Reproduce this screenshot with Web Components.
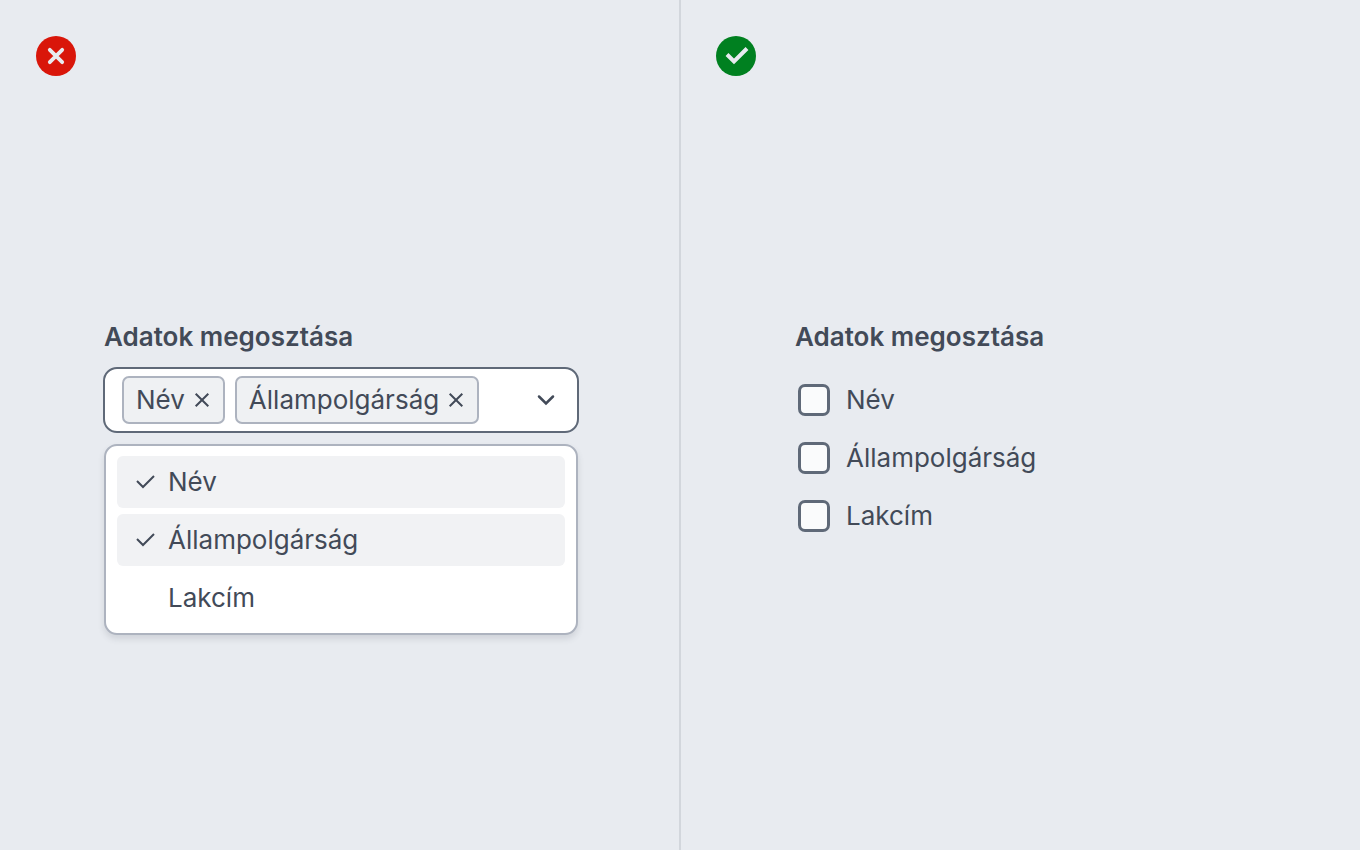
<!DOCTYPE html>
<html lang="hu">
<head>
<meta charset="utf-8">
<meta name="viewport" content="width=device-width, initial-scale=1">
<title>Adatok megosztása</title>
<style>
  body {
    margin: 0;
    font: 400 26px/32px Inter, "Liberation Sans", sans-serif;
    color: #424a58;
    background: #e8ebf0;
    --line: #d2d6dc;
    --outline: #5f6978;
    --outline-soft: #adb3bf;
    --fill: #f1f2f4;
  }
</style>
</head>
<body>
<compare-board>
  <example-panel verdict="bad">
    <multi-select legend="Adatok megosztása" options="Név,Állampolgárság,Lakcím" selected="Név,Állampolgárság"></multi-select>
  </example-panel>
  <example-panel verdict="good">
    <check-group legend="Adatok megosztása">
      <check-row>Név</check-row>
      <check-row>Állampolgárság</check-row>
      <check-row>Lakcím</check-row>
    </check-group>
  </example-panel>
</compare-board>

<script>
class BaseElement extends HTMLElement {
  constructor() {
    super();
    this.attachShadow({ mode: "open" });
  }
}

customElements.define("compare-board", class extends BaseElement {
  connectedCallback() {
    this.shadowRoot.innerHTML = `
      <style>
        :host { display: grid; grid-template-columns: 1fr 1fr; min-height: 100vh; }
      </style>
      <slot></slot>`;
  }
});

customElements.define("verdict-mark", class extends BaseElement {
  connectedCallback() {
    const good = this.getAttribute("verdict") === "good";
    this.shadowRoot.innerHTML = `
      <style>
        :host { display: block; width: 40px; height: 40px; }
        svg { display: block; }
      </style>
      <svg width="40" height="40" viewBox="0 0 40 40" role="img" aria-label="${good ? "Helyes" : "Helytelen"}">
        <circle cx="20" cy="20" r="20" fill="${good ? "#008020" : "#d9160a"}"/>
        <path d="${good ? "M11 18.5l7 7L31 12.5" : "M13.8 13.8l12.4 12.4M26.2 13.8l-12.4 12.4"}"
          fill="none" stroke="#e8ebf0" stroke-width="${good ? 4 : 3.8}" stroke-linecap="${good ? "butt" : "round"}"/>
      </svg>`;
  }
});

customElements.define("example-panel", class extends BaseElement {
  connectedCallback() {
    this.shadowRoot.innerHTML = `
      <style>
        :host { display: block; box-sizing: border-box; padding: 36px 36px 40px; border-right: 1px solid var(--line); }
        :host([verdict="good"]) { padding-left: 35px; border-right: 0; border-left: 1px solid var(--line); }
        .content { margin-top: 245px; padding: 0 64px 0 67px; }
        :host([verdict="good"]) .content { padding-left: 79px; }
      </style>
      <verdict-mark verdict="${this.getAttribute("verdict")}"></verdict-mark>
      <div class="content"><slot></slot></div>`;
  }
});

customElements.define("value-chip", class extends BaseElement {
  connectedCallback() {
    this.shadowRoot.innerHTML = `
      <style>
        :host {
          display: flex; align-items: center; gap: 6px; box-sizing: border-box; height: 48px;
          padding: 0 10px 0 12px; border: 2px solid var(--outline-soft); border-radius: 7px; background: #eff1f3;
        }
        button { display: flex; padding: 1px; border: 0; background: none; color: inherit; cursor: pointer; }
      </style>
      <slot></slot>
      <button type="button" aria-label="Eltávolítás">
        <svg width="20" height="20" viewBox="0 0 20 20" aria-hidden="true"><path d="M3.7 3.7l12.6 12.6M16.3 3.7L3.7 16.3" fill="none" stroke="currentColor" stroke-width="2"/></svg>
      </button>`;
    this.shadowRoot.querySelector("button").onclick = () =>
      this.dispatchEvent(new CustomEvent("remove", { bubbles: true }));
  }
});

customElements.define("menu-option", class extends BaseElement {
  connectedCallback() {
    this.shadowRoot.innerHTML = `
      <style>
        :host { display: block; }
        label { display: flex; align-items: center; height: 52px; padding-left: 18px; gap: 11px; border-radius: 6px; cursor: pointer; }
        label:has(:checked) { background: var(--fill); }
        .tick { display: grid; width: 22px; height: 22px; }
        .tick > * { grid-area: 1 / 1; }
        input { appearance: none; margin: 0; }
        svg { visibility: hidden; pointer-events: none; }
        input:checked + svg { visibility: visible; }
      </style>
      <label>
        <span class="tick">
          <input type="checkbox"${this.hasAttribute("checked") ? " checked" : ""}>
          <svg width="22" height="22" viewBox="0 0 22 22" aria-hidden="true"><path d="M2 10l6 6L19 5" fill="none" stroke="currentColor" stroke-width="2"/></svg>
        </span>
        <span><slot></slot></span>
      </label>`;
    this.shadowRoot.querySelector("input").onchange = e => {
      this.toggleAttribute("checked", e.target.checked);
      this.dispatchEvent(new CustomEvent("toggle-option", { bubbles: true }));
    };
  }
});

customElements.define("multi-select", class extends BaseElement {
  connectedCallback() {
    const options = this.getAttribute("options").split(",");
    const selected = new Set(this.getAttribute("selected").split(","));
    this.shadowRoot.innerHTML = `
      <style>
        :host { display: block; }
        h2 { margin: 0 1px 14px; font: inherit; font-weight: 600; }
        .field {
          display: flex; align-items: center; justify-content: space-between; box-sizing: border-box; min-height: 66px;
          padding: 7px 19px 7px 17px; border: 2px solid var(--outline); border-radius: 14px; background: #fff;
        }
        .chips { display: flex; flex-wrap: wrap; gap: 10px; }
        .toggle { display: flex; padding: 0; border: 0; background: none; color: inherit; cursor: pointer; }
        .menu {
          display: grid; gap: 6px; margin: 11px 1px 0; padding: 10px 11px 9px;
          border: 2px solid var(--outline-soft); border-radius: 13px; background: #fff;
          box-shadow: 0 4px 6px rgb(66 74 88 / 14%);
        }
        .menu[hidden] { display: none; }
      </style>
      <h2 id="legend">${this.getAttribute("legend")}</h2>
      <div class="field" role="group" aria-labelledby="legend">
        <div class="chips"></div>
        <button class="toggle" type="button" aria-label="Lista" aria-expanded="true" aria-controls="menu">
          <svg width="24" height="24" viewBox="0 0 24 24" aria-hidden="true"><path d="M5 8.5l7 7 7-7" fill="none" stroke="currentColor" stroke-width="2.5" stroke-linecap="round"/></svg>
        </button>
      </div>
      <div class="menu" id="menu" role="group" aria-labelledby="legend">
        ${options.map(o => `<menu-option${selected.has(o) ? " checked" : ""}>${o}</menu-option>`).join("")}
      </div>`;
    const $ = s => this.shadowRoot.querySelector(s);
    const items = [...this.shadowRoot.querySelectorAll("menu-option")];
    const drawChips = () => {
      $(".chips").replaceChildren(...items.filter(i => i.hasAttribute("checked")).map(item => {
        const chip = document.createElement("value-chip");
        chip.textContent = item.textContent;
        chip.addEventListener("remove", () => item.shadowRoot.querySelector("input").click());
        return chip;
      }));
    };
    $(".menu").addEventListener("toggle-option", drawChips);
    $(".toggle").onclick = () => {
      $(".menu").hidden = !$(".menu").hidden;
      $(".toggle").setAttribute("aria-expanded", String(!$(".menu").hidden));
    };
    drawChips();
  }
});

customElements.define("check-group", class extends BaseElement {
  connectedCallback() {
    this.shadowRoot.innerHTML = `
      <style>
        :host { display: block; }
        fieldset { margin: 0; padding: 0; border: 0; min-width: 0; }
        legend { padding: 0; margin-bottom: 31px; font-weight: 600; }
        .rows { display: grid; gap: 26px; padding-left: 3px; }
      </style>
      <fieldset>
        <legend>${this.getAttribute("legend")}</legend>
        <div class="rows"><slot></slot></div>
      </fieldset>`;
  }
});

customElements.define("check-row", class extends BaseElement {
  connectedCallback() {
    this.shadowRoot.innerHTML = `
      <style>
        :host { display: block; }
        label { display: flex; width: fit-content; align-items: center; gap: 16px; cursor: pointer; }
        input {
          appearance: none; box-sizing: border-box; width: 32px; height: 32px; margin: 0;
          border: 3px solid var(--outline); border-radius: 7px; background: #fafbfc;
        }
        input:checked { background: var(--outline); box-shadow: inset 0 0 0 4px #fafbfc; }
      </style>
      <label><input type="checkbox"><span><slot></slot></span></label>`;
  }
});
</script>
</body>
</html>
